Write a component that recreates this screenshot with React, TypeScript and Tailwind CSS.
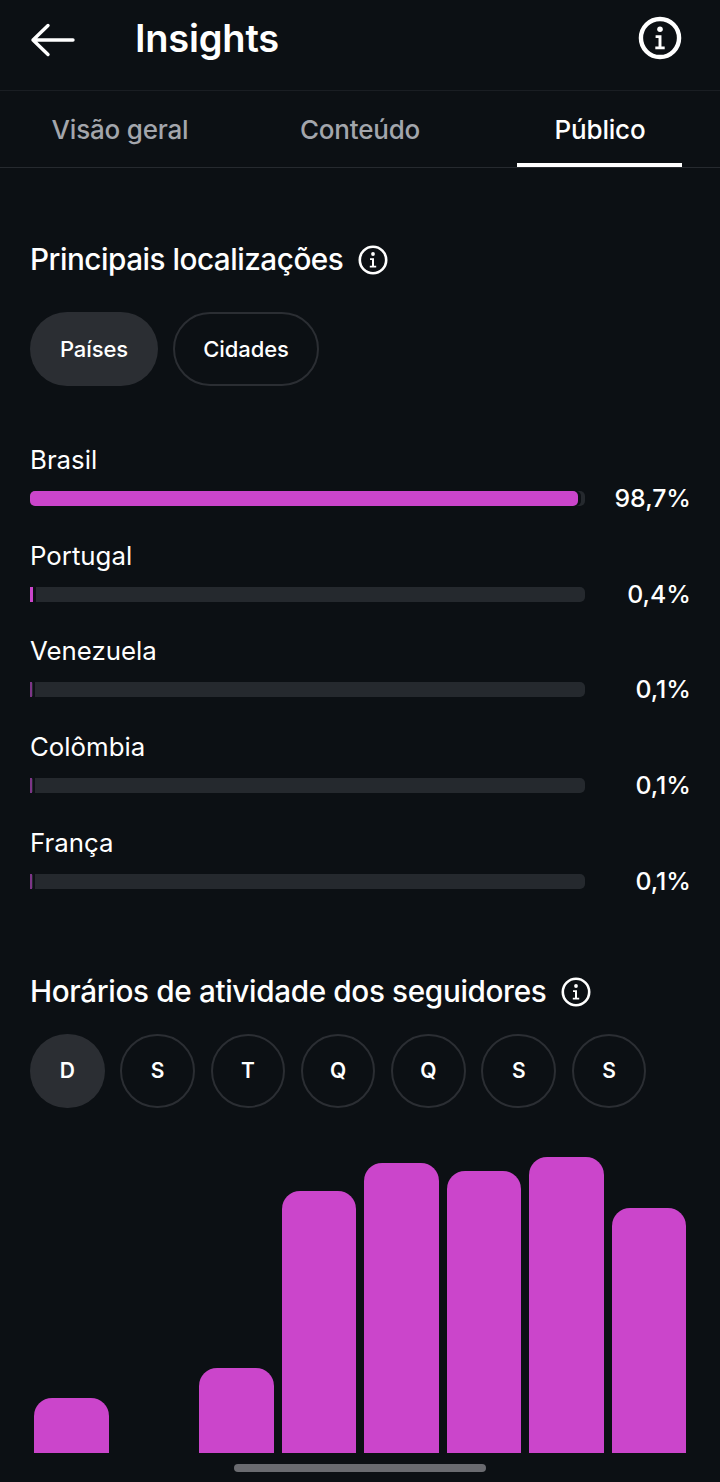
const countries = [
  { name: "Brasil", pct: "98,7%", fill: "w-[548px] rounded-[5px] bg-[#cb45cb]" },
  { name: "Portugal", pct: "0,4%", fill: "w-[3px] bg-[#cb45cb]" },
  { name: "Venezuela", pct: "0,1%", fill: "w-[2px] bg-[#7d3588]" },
  { name: "Colômbia", pct: "0,1%", fill: "w-[2px] bg-[#7d3588]" },
  { name: "França", pct: "0,1%", fill: "w-[2px] bg-[#7d3588]" },
];

const days = ["D", "S", "T", "Q", "Q", "S", "S"];

const hours = ["h-[55px]", "h-0", "h-[85px]", "h-[262px]", "h-[290px]", "h-[282px]", "h-[296px]", "h-[245px]"];

const InfoIcon = ({ size, stroke }: { size: number; stroke: number }) => (
  <svg width={size} height={size} viewBox="0 0 30 30" fill="none">
    <circle cx="15" cy="15" r={14 - stroke / 2 + 0.5} stroke="white" strokeWidth={stroke} />
    <circle cx="15" cy="9" r="1.9" fill="white" />
    <path d="M12 13.2h4v7.6h2.2v1.8h-6.4v-1.8H14v-5.8h-2z" fill="white" />
  </svg>
);

const App = () => {
  return (
    <div className="w-[720px] h-[1482px] overflow-hidden bg-[#0c1014] text-white font-['Inter',sans-serif] relative">
      <div className="h-[91px] border-b border-[#1a1e23] flex items-center pl-[30px] pr-[38px] pb-[15px]">
        <svg width="45" height="34" viewBox="0 0 45 34" fill="none" className="mt-[4px]">
          <path d="M3 17H43M18 2.5L3 17L18 31.5" stroke="white" strokeWidth="3.4" strokeLinecap="round" strokeLinejoin="round" />
        </svg>
        <div className="ml-[60px] text-[38px] font-semibold tracking-[-0.2px] leading-none flex-1">Insights</div>
        <InfoIcon size={44} stroke={3} />
      </div>

      <div className="h-[77px] border-b border-[#262a2f] grid grid-cols-3">
        <div className="flex items-center justify-center text-[26px] font-medium text-[#a3a6ac] tracking-[-0.2px]">Visão geral</div>
        <div className="flex items-center justify-center text-[26px] font-medium text-[#a3a6ac] tracking-[-0.2px]">Conteúdo</div>
        <div className="relative flex items-center justify-center text-[26px] font-medium tracking-[-0.2px]">
          Público
          <div className="absolute bottom-0 left-[37px] w-[165px] h-[4px] bg-white" />
        </div>
      </div>

      <div className="pl-[30px] pr-[30px]">
        <div className="mt-[70px] flex items-center gap-[15px] h-[44px]">
          <div className="text-[29.7px] font-medium tracking-[-0.48px] leading-none">Principais localizações</div>
          <InfoIcon size={30} stroke={2.6} />
        </div>

        <div className="mt-[30px] flex gap-[15px]">
          <div className="h-[74px] w-[128px] rounded-full bg-[#2b2e33] flex items-center justify-center text-[22px] font-medium tracking-[-0.1px]">Países</div>
          <div className="h-[74px] w-[146px] rounded-full border-2 border-[#2b2e33] flex items-center justify-center text-[22px] font-medium tracking-[-0.1px]">Cidades</div>
        </div>

        <div className="mt-[51px] flex flex-col gap-[15.7px]">
          {countries.map((c) => (
            <div key={c.name} className="h-[80px]">
              <div className="text-[25.8px] leading-[46px]">{c.name}</div>
              <div className="mt-[3px] flex items-center justify-between mr-[-1px]">
                <div className="w-[555px] h-[15px] rounded-[5px] bg-[#25292e]">
                  <div className={`h-full shadow-[3px_0_0_0_#0c1014] ${c.fill}`} />
                </div>
                <div className="text-[24.8px] font-medium leading-none">{c.pct}</div>
              </div>
            </div>
          ))}
        </div>

        <div className="mt-[70px] flex items-center gap-[15px] h-[44px]">
          <div className="text-[29.7px] font-medium tracking-[-0.35px] leading-none">Horários de atividade dos seguidores</div>
          <InfoIcon size={30} stroke={2.6} />
        </div>

        <div className="mt-[20px] flex gap-[15.8px]">
          {days.map((d, i) => (
            <div
              key={i}
              className={
                i === 0
                  ? "w-[74.5px] h-[74px] rounded-full bg-[#2b2e33] flex items-center justify-center text-[21px] font-semibold"
                  : "w-[74.5px] h-[74px] rounded-full border-2 border-[#2b2e33] flex items-center justify-center text-[21px] font-semibold"
              }
            >
              {d}
            </div>
          ))}
        </div>

        <div className="mt-[49px] ml-[4px] h-[296px] flex items-end gap-[8px]">
          {hours.map((h, i) => (
            <div key={i} className={`w-[74.5px] rounded-t-[18px] bg-[#cb45cb] ${h}`} />
          ))}
        </div>
      </div>

      <div className="absolute top-[1464px] left-[234px] w-[252px] h-[8px] rounded-full bg-[#6a6b70]" />
    </div>
  );
};

export default App;
